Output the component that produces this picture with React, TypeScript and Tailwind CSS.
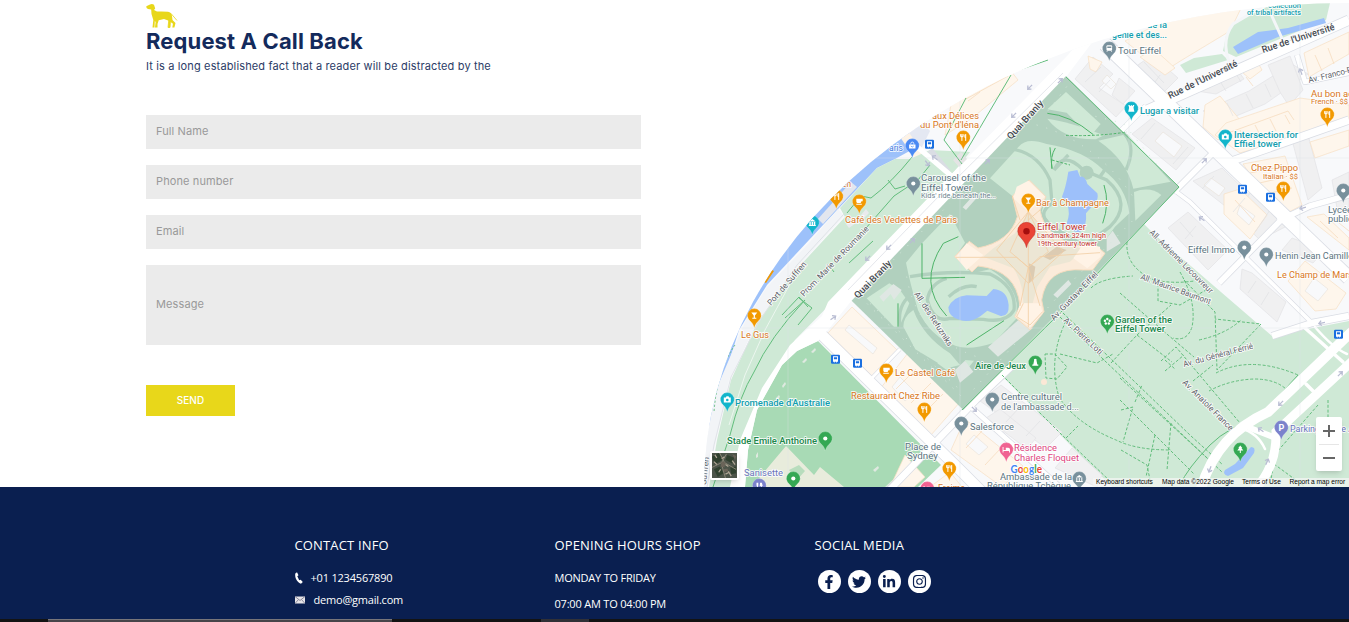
import React from "react";
import { FaFacebookF, FaInstagram, FaLinkedinIn, FaTwitter } from "react-icons/fa";

type Glyph = "food" | "cup" | "glass" | "camera" | "rook" | "museum" | "bag" | "dot" | "train" | "bank" | "flower" | "play" | "tree" | "park" | "bed" | "wc";

const ORANGE = "#f29900";
const TEAL = "#12b5cb";
const SLATE = "#78909c";
const GREEN = "#34a853";
const VIOLET = "#7b82cc";
const PINK = "#f06292";

function PinGlyph({ kind }: { kind: Glyph }) {
  switch (kind) {
    case "food":
      return <path d="M-2.6-3.4v2.6M-1.4-3.4v6.8M-.2-3.4v2.6M-2.6-.8h2.4M2.4-3.4v6.8M1.6-3v3h.8" stroke="#fff" strokeWidth="1" fill="none" />;
    case "cup":
      return <path d="M-3-2.8h6.4v2.5H2c0 1.2-.5 1.8-1.5 1.8h-2C-2.5 1.500-3 .8-3-.3zM-3 2.2h5.500v1H-3z" fill="#fff" />;
    case "glass":
      return <path d="M-3-3h6L.6 0v2.200H2v1h-4v-1h1.400V0z" fill="#fff" />;
    case "camera":
      return <><path d="M-3.500-2h2l.7-1.200h2L2-2h1.500v5h-7z" fill="#fff" /><circle r="1.300" cy=".5" fill={TEAL} /></>;
    case "rook":
      return <path d="M-3-3.500h1.500v1h1v-1h1v1h1v-1H3l-.8 2.500.6 3.200H3v1h-6v-1h.2l.6-3.200z" fill="#fff" />;
    case "museum":
      return <path d="M-3.500-1 0-3.500 3.500-1zM-3-.5h1.500v3H-3zM-.7-.5H.8v3H-.7zM1.500-.5H3v3H1.500zM-3.500 2.400h7v1h-7z" fill="#fff" />;
    case "bank":
      return <path d="M-3.500-1 0-3.500 3.500-1zM-3-.5h1v3h-1zM-.5-.5h1v3h-1zM2-.5h1v3H2zM-3.500 2.400h7v1h-7z" fill="#fff" />;
    case "bag":
      return <><path d="M-3.200-1h6.400v4h-6.400z" fill="#fff" /><path d="M-1.500-1v-1q0-1.400 1.500-1.400T1.500-2v1" stroke="#fff" fill="none" strokeWidth=".8" /><path d="M-1.500.5Q0 2.500 1.500.5" stroke="#4a89f3" fill="none" strokeWidth=".7" /></>;
    case "train":
      return <><rect x="-2.800" y="-3.200" width="5.600" height="5.400" rx="1" fill="#fff" /><path d="M-2-2H2v1.600H-2z" fill={SLATE} /><path d="M-2.500 3.300l1-1.200M2.500 3.300l-1-1.200" stroke="#fff" strokeWidth=".8" /></>;
    case "flower":
      return <g fill="#fff"><circle cx="0" cy="-2.500" r="1.200" /><circle cx="2.400" cy="-.8" r="1.200" /><circle cx="1.500" cy="2" r="1.200" /><circle cx="-1.500" cy="2" r="1.200" /><circle cx="-2.400" cy="-.8" r="1.200" /></g>;
    case "play":
      return <path d="M0-3.800a1.300 1.300 0 0 1 1.200 1.800L2 2h1v1.200h-6V2h1l.8-4A1.300 1.300 0 0 1 0-3.800z" fill="#fff" />;
    case "tree":
      return <path d="M0-4 2-1.500H1.200L3 1H.5v2.500h-1V1H-3l1.800-2.500H-2z" fill="#fff" />;
    case "park":
      return <text x="0" y="3.300" textAnchor="middle" fontFamily="Roboto, sans-serif" fontWeight="700" fontSize="9" fill="#fff">P</text>;
    case "bed":
      return <path d="M-3.700-2.500h.9v3h2.300v-2.300h2.500q1.700 0 1.700 1.700v3h-.9V1.600h-5.600v1.300h-.9z" fill="#fff" />;
    case "wc":
      return <path d="M-2.800-2.800h1.800v3h-.4v3h-1v-3h-.4zM.8-2.800h1.800L3.400.5h-.9v2.700h-1V.5H.4z" fill="#fff" />;
    default:
      return <circle r="2.100" fill="#fff" />;
  }
}

function Pin({ x, y, c, g }: { x: number; y: number; c: string; g: Glyph }) {
  return (
    <g transform={`translate(${x + 0.3} ${y + 0.5})`}>
      <path d="M0 12.500C-.8 9.500-1.500 8-3.600 5.900A6.900 6.900 0 1 1 3.600 5.900C1.500 8 .8 9.500 0 12.500z" fill={c} stroke="#fff" strokeOpacity=".7" strokeWidth=".3" />
      <PinGlyph kind={g} />
    </g>
  );
}

const PINS: [number, number, string, Glyph][] = [
  [963, 137, ORANGE, "food"], [1327, 114, ORANGE, "food"], [1283, 188, ORANGE, "food"], [924, 409, ORANGE, "food"],
  [949, 468, ORANGE, "food"], [836, 196, ORANGE, "food"], [859, 201, ORANGE, "cup"], [886, 370, ORANGE, "cup"],
  [1028, 200, ORANGE, "glass"], [754, 315, ORANGE, "glass"], [1131, 108, TEAL, "rook"], [1225, 136, TEAL, "camera"],
  [727, 399, TEAL, "camera"], [812, 222, TEAL, "museum"], [912, 145, "#4a89f3", "bag"], [913, 183, SLATE, "dot"],
  [1109, 48, SLATE, "train"], [1343, 190, SLATE, "dot"], [1244, 247, SLATE, "dot"], [1266, 254, SLATE, "dot"],
  [992, 399, SLATE, "dot"], [961, 423, SLATE, "dot"], [1079, 478, SLATE, "bank"], [1107, 321, GREEN, "flower"],
  [1035, 362, GREEN, "play"], [825, 438, GREEN, "dot"], [793, 478, GREEN, "dot"], [1240, 449, GREEN, "tree"],
  [1281, 427, VIOLET, "park"], [759, 485, VIOLET, "wc"], [1006, 449, PINK, "bed"], [927, 488, PINK, "bed"],
];

const BUSES: [number, number][] = [[929, 144], [1242, 189], [1270, 197], [835, 359], [857, 363], [1338, 334]];

type Label = [string, number, number, number, string, number?, number?];
const CO = "#d9771c";
const CT = "#129eaf";
const CS = "#5b7480";
const CG = "#20874b";
const CV = "#6a75bd";
const CR = "#c5352e";
const CK = "#e0457f";

/* text, x, baseline, width, colour, size, rotation */
const LABELS: Label[] = [
  ["aux Délices", 932, 119, 47, CO], ["du Pont d'Iéna", 920, 128, 59, CO],
  ["aris", 889, 151, 14, "#3f7ae0"], ["en", 842, 187, 9, CO],
  ["Carousel of the", 921, 181, 65, CS], ["Eiffel Tower", 921, 190.500, 51, CS],
  ["Kids' ride beneath the...", 921, 198, 75, "#71858f", 7.300],
  ["Café des Vedettes de Paris", 845, 223, 112, CO],
  ["Bar à Champagne", 1036, 206, 73, CO],
  ["Eiffel Tower", 1037, 230, 49, CR], ["Landmark 324m high", 1037, 238, 69, CR, 7.300], ["19th-century tower", 1037, 245.500, 60, CR, 7.300],
  ["collection", 1268, 8, 33, CT, 7.500], ["of tribal artifacts", 1247, 15, 54, CT, 7.500],
  ["de la", 1147, 28, 20, CT], ["genie et des...", 1112, 38, 55, CT], ["Tour Eiffel", 1118, 54, 43, CS],
  ["Lugar a visitar", 1140, 114, 59, CT],
  ["Intersection for", 1234, 138, 64, CT], ["Effiel tower", 1234, 147, 47, CT],
  ["Au bon accueil", 1311, 97, 62, CO], ["French · $$", 1311, 103.500, 37, CO, 7.300],
  ["Chez Pippo", 1251, 171, 47, CO], ["Italian · $$", 1263, 179, 35, CO, 7.300],
  ["Lycée", 1328, 213, 24, CS], ["public", 1328, 222, 25, CS],
  ["Eiffel Immo", 1188, 253, 47, CS], ["Henin Jean Camille", 1275, 259, 78, CS],
  ["Le Champ de Mars", 1277, 277.500, 76, CO],
  ["Le Gus", 741, 337.500, 28, CO], ["Promenade d'Australie", 735, 405.500, 95, CT],
  ["Stade Emile Anthoine", 727, 444, 90, CG], ["Sanisette", 744, 475.500, 39, CV],
  ["Le Castel Café", 895, 376, 60, CO], ["Restaurant Chez Ribe", 851, 399, 89, CO],
  ["Aire de Jeux", 975, 369, 51, CG], ["Garden of the", 1115, 323, 57, CG], ["Eiffel Tower", 1115, 332, 50, CG],
  ["Centre culturel", 1001, 400, 61, CS], ["de l'ambassade d...", 1001, 409.500, 78, CS],
  ["Salesforce", 970, 430, 44, CS],
  ["Place de", 905, 450, 36, CS], ["Sydney", 907, 459, 31, CS],
  ["Résidence", 1014, 451, 43, CK], ["Charles Floquet", 1014, 460.500, 65, CK],
  ["Ambassade de la", 1000, 480, 72, CS], ["République Tchèque", 987, 489, 84, CS],
  ["Freime", 938, 491, 27, CO], ["Parking Joffre A", 1290, 432, 64, CV],
];

const ROAD = "#5e6269";
const ROADS: Label[] = [
  ["Quai Branly", 1011, 140, 49, "#444950", 9.500, -48], ["Quai Branly", 858, 299, 49, "#444950", 9.500, -46],
  ["Rue de l'Université", 1170, 99, 76, "#444950", 9.500, -26], ["Rue de l'Université", 1263, 53, 76, "#444950", 9.500, -18],
  ["Av. Franco-Russe", 1309, 83, 62, ROAD, 8.300, -14],
  ["Port de Suffren", 771, 306, 55, ROAD, 8.300, -49], ["Prom. Marie de Roumanie", 804, 297, 94, ROAD, 8.300, -46],
  ["All. des Refuzniks", 914, 294, 63, ROAD, 8.300, 57],
  ["Av. Gustave Eiffel", 1054, 321, 64, ROAD, 8.300, -46], ["Av. Pierre Loti", 1063, 321, 50, ROAD, 8.300, 43],
  ["All. Adrienne Lecouvreur", 1149, 233, 86, ROAD, 8.300, 45],
  ["All. Maurice Baumont", 1140, 279, 74, ROAD, 8.300, 20],
  ["Av. du Général Ferrié", 1184, 367, 72, ROAD, 8.300, -15],
  ["Av. Anatole France", 1182, 383, 68, ROAD, 8.300, 45],
  ["Suffren", 706, 485, 28, ROAD, 8.300, -84],
];

function MapLabel({ l, weight }: { l: Label; weight: number }) {
  const [t, x, y, w, c, size = 9.3, rot = 0] = l;
  return (
    <text x={x} y={y} textLength={w} lengthAdjust="spacingAndGlyphs" fill={c} fontSize={size} fontWeight={weight} transform={rot ? `rotate(${rot} ${x} ${y})` : undefined}>
      {t}
    </text>
  );
}

const GRAY_BLOCKS = [
  "1093,57 1113,74 1099,88 1126,106 1116,117 1075,79", "1131,70 1152,55 1178,78 1164,92", "1119,78 1135,91 1123,104 1112,95",
  "1152,118 1195,148 1176,170 1132,134", "1222,168 1260,205 1243,220 1193,181", "1252,190 1270,208 1287,226 1260,240 1235,216",
  "1168,228 1188,212 1228,250 1208,270", "1190,90 1232,62 1244,79 1216,94", "1203,111 1249,91 1292,64 1308,74 1265,104 1229,119",
  "1268,65 1290,56 1303,90 1289,106 1280,92", "1292,140 1308,135 1322,188 1308,200", "1332,180 1349,172 1349,207 1338,214",
  "1242,269 1252,273 1286,302 1277,322 1240,289", "1292,238 1325,250 1313,263 1282,250", "1001,385 1062,432 1046,448 980,401",
  "1000,409 1036,438 1027,449 986,418", "1072,448 1102,475 1097,487 1055,468",
];
const CREAM_BLOCKS = [
  "955,85 1011,71 1018,80 971,119 945,135", "1088,56 1102,62 1096,72 1090,69", "1125,41 1190,7 1245,0 1230,31 1182,60 1163,72 1130,45",
  "1140,57 1154,49 1175,68 1165,75", "1205,105 1220,96 1240,120 1218,140 1203,127", "1242,72 1257,61 1262,70 1250,79",
  "1304,53 1349,32 1349,54 1309,77", "1215,135 1226,123 1300,98 1349,105 1349,122 1240,153", "1243,164 1285,156 1302,205 1280,217",
  "1224,194 1240,189 1267,215 1250,239 1224,214", "1310,142 1349,130 1349,146 1315,158", "1307,217 1324,214 1349,238 1349,250",
  "1288,281 1305,261 1346,293 1336,309 1315,311", "852,307 897,350 873,377 828,333", "908,353 960,402 931,435 880,389",
  "965,419 1023,466 1002,487 951,450", "905,455 925,477 914,487 890,487", "950,472 962,487 930,487",
];

const PATHS = [
  "M1091 288q10-10 42-12", "M1068 317q-21 40-9 80 16 26 57 43 20 10 55 10",
  "M1060 317l45 44 82 78 35 33", "M1063 313l46 44 82 79 32 29", "M1111 363l26-28 35 27M1137 335l34-30M1060 354l37 9 16-9M1165 371l19-16M1165 360l10 9",
  "M1127 242q-2 25 27 38 20 4 40 1M1180 272q17 30 12 55-5 15-19 11", "M1158 279l0 22 22 4 26-15",
  "M1120 293l48 42 26 22M1184 280l31 32 2 58 44-46-46-5", "M1199 340q27-6 42-20M1216 373q35-18 82 2M1209 391q20-11 45-12 22 0 33 11M1193 381l20-16M1161 361l15-14 64 76",
  "M1120 378l87 80M1120 400l74 74M1135 402l7-17M1155 435l-9 42M1171 423l-4 47M1121 410l12-3-10 35M1121 450l26 15 4 20",
  "M1002 375l60 60 50 48M1066 438l12-12M1045 354h10l12 13-10 12-11-1z",
  "M1318 405l-42 48-6 31M1328 400v17M1274 464l30 22",
];

const BOUNDS = [
  "M912 157q-20 25-41 41l-10-2-14 17M888 180l7 9 10-3M930 165l-12 15-24 16-28 32M873 241l-24 22M805 300l-20 18",
  "M805 300q-35 37-51 72-14 23-24 63l-17 52", "M782 315l17-18 9 10M799 298l13 10-14 17M834 272l-3-4",
  "M966 98l-22 42 18 24M1011 75l-50 85M1048 60l-32 11",
  "M962 410l100-99 117-124-113-110", "M1298 375l-40 44q-29 7-48 26-23 24-30 40",
];

/* Gardens around the tower, drawn on a grid three times finer than the map's. */
function TowerGardens() {
  return (
    <g transform="translate(850 70) scale(.33333)">
      <path d="M648 18 988 352 340 1020 5 692z" fill="#b1d0be" />
      <g fill="#cfe9d6">
        <path d="M648 66 752 162 720 200 650 128 592 118z" />
        <path d="M592 146Q660 155 762 196L738 208Q640 210 592 146z" />
        <path d="M745 212 832 192 962 335 850 356Q830 270 745 212z" />
        <path d="M852 366Q900 348 934 375L856 452z" />
        <path d="M506 230Q530 200 590 222 700 240 760 300 828 350 838 430L795 470 770 505 690 525 610 470 575 425 588 380 537 330 487 378 420 325z" />
        <path d="M216 520 300 432 345 518 316 560 366 610 420 598Q490 640 500 700L500 745 432 818Q360 842 318 828 240 800 204 720 180 640 168 578z" />
        <path d="M50 685 118 640 150 660 178 700 148 770 132 770z" />
        <path d="M160 770Q160 740 190 720 220 800 300 850L330 885 290 895 196 838z" />
        <path d="M262 880 300 858 322 880 290 900zM345 870 372 872 350 900z" />
      </g>
      <g fill="none" stroke="#b1d0be" strokeWidth="10">
        <path d="M470 236Q560 240 600 330L606 400Q560 430 600 465L690 520M612 300Q640 240 700 300L770 330Q850 400 780 470L700 530M612 300L655 255M750 320Q790 270 760 240M822 190Q860 230 828 300" />
        <path d="M180 620Q300 600 420 612 500 650 492 720 470 760 400 748L300 745Q250 760 232 690 240 640 290 625M150 770Q140 700 190 670M296 680Q340 640 380 650M350 400Q390 370 372 400" />
      </g>
      <circle cx="710" cy="308" r="21" fill="#b1d0be" />
      <path d="M655 305 682 300 690 320Q705 315 712 342L742 370Q748 390 730 405L708 430Q712 470 690 486 664 490 650 460 662 430 652 405L636 380Q648 350 655 305z" fill="#9dc0fa" />
      <path d="M295 712Q310 680 350 676L410 678 430 657Q472 660 476 705 478 740 452 738L412 722 392 738Q360 760 330 750 295 742 295 712z" fill="#9dc0fa" />
      <path d="M505 750 548 775 444 860 414 832zM315 900 345 872 370 905 330 938zM88 680 130 642 155 660 132 690 122 672 100 695zM610 674 655 630 664 642 622 684zM338 412 372 374 380 384 348 420zM770 505 788 482 812 520 770 545z" fill="#dfe7e3" />
      <path d="M592 130Q660 135 730 194M606 296Q600 260 616 234M606 296L600 232M762 345Q780 400 758 460M325 500L280 520Q200 640 290 738M216 520V625L345 622M144 770V700M462 752L350 825" stroke="#4db368" strokeWidth="3" fill="none" />
      <path d="M648 196Q740 200 830 186M606 270L660 285" stroke="#4db368" strokeWidth="3" strokeDasharray="8 5" fill="none" />
      <path d="M560 165Q760 220 880 430M620 110L820 160 950 320M650 50L580 140M170 620Q200 800 380 860M30 680L340 985M60 700L330 960M910 390L660 640 360 970M130 570L300 400" stroke="#d5e8dc" strokeWidth="3" strokeDasharray="3 27" fill="none" />
      <path d="M538 330 588 380 570 420Q585 505 690 528L735 524 765 550 728 600 700 600Q590 590 575 690L582 725 540 780 494 740 510 708Q500 600 384 588L366 606 314 560 358 514 384 534Q480 515 502 440L487 378z" fill="#fbebda" stroke="#f6dcbf" strokeWidth="3" />
      <path d="M535 425 590 490 700 540 660 575 600 590 562 650 548 700H520Q520 640 490 595L400 560 430 535 495 490z" fill="#ece6d4" />
      <path d="M500 350 535 332 585 380 535 425 490 385zM350 520 400 555 350 600 318 562zM700 522 750 530 752 560 712 595 670 565zM510 700H570L578 730 540 772 500 738z" fill="#fff3e6" />
      <path d="M620 530 580 560 600 570 650 540zM537 580 556 590 550 630 537 640z" fill="#dccbb2" />
      <path d="M535 425 440 540 535 640 640 545zM535 425 480 545 535 592 595 545zM535 425V772M318 562H500L535 592 570 560 750 548M510 708 535 592 570 708M487 378 510 450M570 420 535 450M520 700 500 740 540 765 578 725" fill="none" stroke="#f2cfa6" strokeWidth="2.500" />
    </g>
  );
}

function ParisMap() {
  return (
    <svg className="block h-[484px] w-[645px]" viewBox="704 3 645 484" role="img" aria-label="Map of the Eiffel Tower">
      <rect x="704" y="3" width="645" height="484" fill="#f8f9fb" />
      {/* river and quays */}
      <path d="M690 487 704 400 735 330 780 240 870 140 903 115 915 148 895 159 877 168 838 209 809 240 767 285 739 330z" fill="#9dc1fa" />
      <path d="M818 219 851 182 857 187 823 224z" fill="#e3e6ee" />
      <path d="M898 132l22-13 10 12-12 24z" fill="#e4e8f2" />
      <path d="M838 209 844 216 795 270 757 323 729 380 714 450 708 487H690L716 390 745 322 767 287 809 243z" fill="#f2f4f7" />
      <path d="M900 137l8-6 18 27-6 8z" fill="#fdf3e7" />
      <path d="M764 282l8-12 2 1-8 12z" fill={ORANGE} />
      <path d="M910 159 895 159 877 168 840 208 845 217 796 270 757 323 731 380 717 440 709 487H735L745 435 766 385 795 340 844 290 930 202 970 152 930 150z" fill="#cfe9d6" />
      <path d="M790 284 765 330 745 375 729 425" fill="none" stroke="#fff" strokeOpacity=".6" />
      <path d="M844 214 797 265 760 320 731 377 714 445 707 487" fill="none" stroke="#dfe2e7" />
      <path d="M846 224l8-6 2 5-7 5zM861 215l5-6 3 4-5 5z" fill="#e9ebed" />
      {/* champ de mars */}
      <path d="M1179 187 1140 220 1156 236 1272 336 1349 321V487H1112L1001 375 962 410 1100 240z" fill="#cfe9d6" />
      {/* stadium */}
      <path d="M818 341 797 351 782 365 757 410 748 450 745 487H918L941 465z" fill="#a8dab5" />
      <path d="M760 477 786 446 814 475 820 467 844 487H752z" fill="#e8ecdc" />
      <path d="M789 470l10-5 6 6-8 9z" fill="#b8ddbd" />
      <path d="M910 464l4 3-21 20h-8zM873 470l5-4 1 2-4 4zM782 386l3-4 1 2-3 4zM802 362l4-4 1 2-3 3zM811 352l4-4 1 2-3 3zM776 398l3-3 1 2-3 3zM756 455l2-3v5l-2 1z" fill="#dfe9e0" />
      {/* buildings */}
      <g fill="#f0f0f1" stroke="#e2e3e5" strokeWidth=".7">{GRAY_BLOCKS.map((p) => <polygon key={p} points={p} />)}</g>
      <g fill="#fef6ec" stroke="#f7dfc4" strokeWidth=".7">{CREAM_BLOCKS.map((p) => <polygon key={p} points={p} />)}</g>
      <g fill="#f8f9fb" stroke="#e8e0d8" strokeWidth=".6">
        <path d="M849 325l28 23-4 6-28-24zM1107 75l9 9-5 5-9-8zM1163 132l19 14-8 11-19-16zM1240 205l15 11-6 9-12-11zM974 435l14 12-9 8-13-11zM1314 278l14 11-10 12-13-10zM900 377l15 15-10 9-13-14zM1211 178l14 10-6 8-15-11z" />
      </g>
      <g stroke="#f5d8b7" strokeWidth=".7" fill="none">
        <path d="M960 90l6 9 42-23M968 101l12-9M1228 133l60-22 6 9M1240 130l6 12M1255 125l6 12M1270 119l6 12M1285 115l5 9M1246 77l7 9M1315 55l7 16M1328 48l6 16M1250 173l35-7M1255 184l31-7M1262 195l30-7M1320 221l18 17M1334 219l15 12M916 369l-20 20M931 383l-20 20M943 394l-18 18M982 431l-16 17M1001 448l-16 17M1235 200l20 22" />
      </g>
      <g stroke="#dfe1e4" strokeWidth=".7" fill="none">
        <path d="M1101 67l-16 15M1110 80l-11 12M1144 62l20 21M1160 75l-7 10M1218 78l8 13M1233 69l8 13M1227 103l6 13M1246 94l7 14M1265 84l6 13M1155 123l-14 16M1188 147l-15 17M1214 176l-12 13M1245 198l-12 14M1270 210l-15 22M1180 222l13 15M1196 226l-11 13M1256 281l-8 12M1269 292l-8 13M1020 407l-14 15M1040 421l-14 15" />
      </g>
      {/* green north of Rue de l'Université */}
      <path d="M1233 23 1275 3H1330L1326 20 1236 57 1223 51 1226 36z" fill="#cfe9d6" />
      <path d="M1180 65 1194 58 1222 54 1228 60 1186 73z" fill="#cfe9d6" />
      <path d="M1233 47 1258 32 1288 28 1324 18 1326 23 1278 37 1238 54z" fill="#9dc1fa" />
      <path d="M1229 62Q1221 40 1233 24L1262 7M1271 14l14 31" stroke="#f4f6f8" strokeWidth="3" fill="none" />
      {/* streets */}
      <g fill="none" stroke="#dadde4" strokeLinejoin="round">
        <path d="M1105 44 1349 278" strokeWidth="15" /><path d="M1145 111 1349 20" strokeWidth="11" />
        <path d="M1229 162 1349 120" strokeWidth="9" /><path d="M1174 192 1212 154" strokeWidth="7" />
        <path d="M1278 221 1310 206 1349 195" strokeWidth="7" /><path d="M1219 283 1285 216" strokeWidth="7" />
        <path d="M1174 190 1190 202 1312 323" strokeWidth="5" /><path d="M1272 336 1312 323 1349 316" strokeWidth="8" />
        <path d="M820 333 960 470 1000 510" strokeWidth="12" /><path d="M880 500 976 400 1012 366" strokeWidth="8" />
        <path d="M972 408 1060 487" strokeWidth="6" /><path d="M1297 55 1305 82 1349 73" strokeWidth="6" />
        <path d="M870 380 900 349" strokeWidth="4" /><path d="M930 150l18 22M1120 132l26-26" strokeWidth="6" />
      </g>
      <g fill="none" stroke="#fff" strokeLinejoin="round">
        <path d="M1105 44 1349 278" strokeWidth="13.500" /><path d="M1145 111 1349 20" strokeWidth="9.500" />
        <path d="M1229 162 1349 120" strokeWidth="7.500" /><path d="M1174 192 1212 154" strokeWidth="5.500" />
        <path d="M1278 221 1310 206 1349 195" strokeWidth="5.500" /><path d="M1219 283 1285 216" strokeWidth="5.500" />
        <path d="M1174 190 1190 202 1312 323" strokeWidth="3.800" /><path d="M1272 336 1312 323 1349 316" strokeWidth="6.500" />
        <path d="M820 333 960 470 1000 510" strokeWidth="10.500" /><path d="M880 500 976 400 1012 366" strokeWidth="6.500" />
        <path d="M972 408 1060 487" strokeWidth="4.500" /><path d="M1297 55 1305 82 1349 73" strokeWidth="4.500" />
        <path d="M870 380 900 349" strokeWidth="3" /><path d="M915 145l40 34M1120 132l26-26" strokeWidth="5" />
      </g>
      <path d="M1100 32 1066 77 852 300 828 330 818 341 797 351 782 365 757 410 748 450 745 487H730L740 440 762 388 790 345 822 316 828 302 930 196 1068 55 1082 38z" fill="#fff" />
      <path d="M1063 73 940 195 848 290" stroke="#dde0e6" strokeWidth=".8" fill="none" />
      <path d="M953 160l8-8 6 7-8 8z" fill="#e4e4e4" />
      <TowerGardens />
      {/* garden paths */}
      <g fill="none" stroke="#62bd7c" strokeWidth="1" strokeDasharray="3 1.800">{PATHS.map((d) => <path key={d} d={d} />)}</g>
      <g fill="none" stroke="#62bd7c" strokeWidth="1">{BOUNDS.map((d) => <path key={d} d={d} />)}</g>
      <path d="M735 345q-18 25-21 67" fill="none" stroke="#62bd7c" strokeDasharray="2 2" />
      <circle cx="1044" cy="382" r="3" fill="#fbe8d6" />
      {/* avenue at lower right */}
      <g fill="none" stroke="#fff" strokeLinecap="round">
        <path d="M1362 322 1268 412Q1215 436 1200 492" strokeWidth="10" />
        <path d="M1362 352 1276 432Q1277 470 1250 494" strokeWidth="9" />
        <path d="M1250 428 1276 438" strokeWidth="6" /><path d="M1306 384l8 8M1305 328l38 34" strokeWidth="3.500" />
        <path d="M1315 327q18 21 32 27M1240 428q18 5 25 21" strokeWidth="2.500" />
      </g>
      <path d="M1225 470l10-6 16-17q5 0 3 6l-11 15-15 8q-6-2-3-6z" fill="#9dc1fa" />
      <g stroke="#b9bdd3" strokeWidth="1.300" fill="none">
        {[[1030, 87, 135], [1014, 115, 135], [1060, 81, -45], [987, 162, -45], [935, 158, 215], [927, 163, 55], [889, 247, 135], [868, 258, 135], [912, 241, -45], [833, 318, -35], [1204, 161, -45], [1202, 219, 215], [1303, 208, 165], [1322, 323, 170], [1281, 403, 135], [1340, 374, -45], [1261, 430, 215], [1267, 462, -65], [1210, 469, 110], [1301, 72, -110], [974, 409, 45]].map(([x, y, r]) => (
          <path key={`${x}-${y}`} d="M-3 0h6M.5-2.500 3.200 0 .5 2.500" transform={`translate(${x} ${y}) rotate(${r})`} />
        ))}
      </g>
      <path d="M788 3v484M960 3v484M1129 3v484M1300 3v484M704 158h645M704 328h645" stroke="#dce3e4" strokeOpacity=".5" strokeWidth=".7" />
      {/* labels */}
      <g fontFamily="Roboto, sans-serif" stroke="#fff" strokeWidth="1.800" strokeOpacity=".85" paintOrder="stroke" strokeLinejoin="round">
        {ROADS.map((l, i) => <MapLabel key={i} l={l} weight={l[4] === ROAD ? 400 : 500} />)}
        {LABELS.map((l, i) => <MapLabel key={i} l={l} weight={l[4] === CT || l[4] === CG ? 500 : 400} />)}
      </g>
      {BUSES.map(([x, y]) => (
        <g key={x} transform={`translate(${x + 0.5} ${y + 0.3})`}>
          <rect x="-4.500" y="-4.500" width="9" height="9" rx="1.200" fill="#1a6fe0" />
          <path d="M-2.500-3h5v5.500h-1v.8h-.8v-.8H-.8v.8h-.8v-.8h-.9z" fill="#fff" /><path d="M-1.600-2h3.200v2h-3.200z" fill="#1a6fe0" />
        </g>
      ))}
      {PINS.map(([x, y, c, g]) => <Pin key={`${x}-${y}`} x={x} y={y} c={c} g={g} />)}
      <g transform="translate(1026.500 231)">
        <path d="M0 16.500C-1 12-2.500 10.500-5.500 6.800A8.700 8.700 0 1 1 5.500 6.800C2.500 10.500 1 12 0 16.500z" fill="#ea4335" stroke="#c5352e" strokeWidth=".6" />
        <circle r="3.200" cy=".3" fill="#a50e0e" />
      </g>
      <text x="1010.500" y="472.500" fontFamily="Lato, sans-serif" fontWeight="700" fontSize="10.500" textLength="31.500" lengthAdjust="spacingAndGlyphs" stroke="#fff" strokeWidth="1.500" paintOrder="stroke">
        <tspan fill="#4285f4">G</tspan><tspan fill="#ea4335">o</tspan><tspan fill="#fbbc04">o</tspan><tspan fill="#4285f4">g</tspan><tspan fill="#34a853">l</tspan><tspan fill="#ea4335">e</tspan>
      </text>
    </svg>
  );
}

function Satellite() {
  return (
    <svg viewBox="0 0 26 26" className="h-full w-full">
      <rect width="26" height="26" fill="#4c5449" />
      <path d="M0 4 7 0 11 7 3 12zM16 2l7 3-2 6-7-4zM2 17l6-3 4 7-6 4zM19 15l6-1v7l-5 1z" fill="#30412f" />
      <path d="M8 0l5 10 12 7M0 15l10-5 5-9M10 12l4 14" stroke="#8a8577" fill="none" />
      <path d="M3 2l2 3M14 12l3 2M17 19l3 5M7 20l2-3M21 8l3 4M10 6l3-2M2 9l3 3M14 22l4-2" stroke="#b0a696" strokeWidth="1.300" />
      <path d="M10 9l4 1-1 5-4-1zM21 1l4 2-1 4zM12 17l4-1 1 3-4 1z" fill="#6a6459" />
    </svg>
  );
}

function Dog() {
  return (
    <svg className="block h-[26px] w-8" viewBox="146 3 32 26" fill="#e8d71a">
      <path d="M146.300 6.200 150 4.600Q152 3.300 154 4.800L155.200 8.500 154 10 157 11.600Q164 11.500 168 11.700 171.500 12 172 16L172.500 20 175.500 23 174.400 27.500H172.300L173 23.800 168.800 20.700 164 19Q160.500 20 158.700 20.200L157.500 24V27.500H155L155.600 22 154.800 21 154.500 27.500H152.500L153.300 20 151.500 14 151.200 9.500 148 9Q146 8.300 146.300 6.200z" />
      <path d="M170.500 20.500l-.5 7h-2l.8-7.500zM171 13.500 177 20.500" stroke="#e8d71a" strokeWidth=".8" />
    </svg>
  );
}

const FIELD = "w-[495px] border-0 bg-[#ebebeb] px-[10px] pb-[2px] text-[11px] tracking-[0.010em] text-[#555] outline-none placeholder:text-[#999]";

function CallbackForm() {
  return (
    <section className="ml-[146px] flex w-[495px] shrink-0 flex-col pt-[3px]">
      <Dog />
      <h1 className="text-[22px] leading-[24px] font-bold tracking-[0.006em] whitespace-nowrap text-[#132a5c]">Request A Call Back</h1>
      <p className="mt-[5px] text-[11px] leading-[16px] tracking-[0.013em] whitespace-nowrap text-[#2b3b66]">It is a long established fact that a reader will be distracted by the</p>
      <form className="mt-[41px] flex flex-col items-start gap-4">
        <input className={`${FIELD} h-[34px]`} placeholder="Full Name" />
        <input className={`${FIELD} h-[34px]`} placeholder="Phone number" />
        <input className={`${FIELD} h-[34px]`} placeholder="Email" />
        <input className={`${FIELD} h-20`} placeholder="Message" />
        <button type="button" className="mt-6 h-[31px] w-[89px] bg-[#e8d71a] text-[10px] font-medium text-white">SEND</button>
      </form>
    </section>
  );
}

function Footer() {
  return (
    <footer className="flex h-[132px] shrink-0 bg-[#0a1f50] pt-[49px] pl-[294.500px] font-['Open_Sans',sans-serif] text-white">
      <div className="w-[260px]">
        <h2 className="text-[13px] leading-[18px] tracking-[0.012em]">CONTACT INFO</h2>
        <div className="mt-[15px] flex h-[18px] items-center text-[11px] tracking-[-0.018em]">
          <svg className="mr-2 h-3 w-2" viewBox="0 0 8 12" fill="#fff"><path d="M.3 1.500 2 .2l1.500 3-1.200 1 1.900 4 1.500-.5L7.800 10 6 11.700C2.500 10.500-.5 6 .3 1.500z" /></svg>
          <span>+01 1234567890</span>
        </div>
        <div className="mt-1 flex h-[18px] items-center text-[11px] tracking-[-0.018em]">
          <svg className="mr-[9px] h-2 w-[10px]" viewBox="0 0 10 8"><path d="M0 .5h10v7H0z" fill="#e6e4e8" /><path d="M0 .5l5 4 5-4M0 7.500l3.500-4M10 7.500l-3.500-4" stroke="#817f91" fill="none" strokeWidth=".9" /></svg>
          <span>demo@gmail.com</span>
        </div>
      </div>
      <div className="w-[260px]">
        <h2 className="text-[13px] leading-[18px] tracking-[0.012em]">OPENING HOURS SHOP</h2>
        <p className="mt-[15px] text-[11px] leading-[18px] tracking-[-0.020em]">MONDAY TO FRIDAY</p>
        <p className="mt-2 text-[11px] leading-[18px] tracking-[-0.018em]">07:00 AM TO 04:00 PM</p>
      </div>
      <div>
        <h2 className="text-[13px] leading-[18px] tracking-[0.012em]">SOCIAL MEDIA</h2>
        <div className="mt-4 ml-[3px] flex gap-[7px] text-[#0a1f50]">
          <a className="flex size-[23px] items-center justify-center rounded-full bg-white"><FaFacebookF size={14} /></a>
          <a className="flex size-[23px] items-center justify-center rounded-full bg-white"><FaTwitter size={14} /></a>
          <a className="flex size-[23px] items-center justify-center rounded-full bg-white"><FaLinkedinIn size={14} /></a>
          <a className="flex size-[23px] items-center justify-center rounded-full bg-white"><FaInstagram size={15} /></a>
        </div>
      </div>
    </footer>
  );
}

export default function App() {
  return (
    <div className="flex h-[622px] w-[1349px] flex-col overflow-hidden bg-white font-[Inter,sans-serif]">
      <main className="flex h-[487px] shrink-0 justify-between">
        <CallbackForm />
        <div className="relative mt-[3px] h-[484px] w-[645px] overflow-hidden rounded-tl-[100%]">
          <ParisMap />
          <button type="button" className="absolute top-[448px] left-[6px] size-[29px] rounded-[2px] border-2 border-white bg-white shadow-md"><Satellite /></button>
          <div className="absolute top-[414px] left-[612px] flex h-[54px] w-[26px] flex-col items-center rounded-[2px] bg-white shadow-md">
            <button type="button" className="flex h-[27px] items-center"><svg className="size-3" viewBox="0 0 12 12"><path d="M5 0h2v5h5v2H7v5H5V7H0V5h5z" fill="#666" /></svg></button>
            <div className="h-px w-5 bg-[#e6e6e6]" />
            <button type="button" className="flex h-[26px] items-center"><svg className="size-3" viewBox="0 0 12 12"><path d="M0 5h12v2H0z" fill="#666" /></svg></button>
          </div>
          <div className="absolute right-0 bottom-0 flex h-[9px] w-[256px] items-center bg-[#f5f5f5]/70 pl-[3px] font-['Liberation_Sans',sans-serif] text-[6.600px] leading-none whitespace-nowrap text-black">
            <span className="w-[66px]">Keyboard shortcuts</span>
            <span className="w-[80px]">Map data ©2022 Google</span>
            <span className="w-[47.500px]">Terms of Use</span>
            <span>Report a map error</span>
          </div>
        </div>
      </main>
      <Footer />
      <div className="flex h-[3px] shrink-0 bg-[#131313] pl-12">
        <div className="h-[3px] w-[344px] border-t border-[#77757a] bg-[#47454a]" />
        <div className="ml-[149px] h-[3px] w-12 bg-[#303036]" />
      </div>
    </div>
  );
}
